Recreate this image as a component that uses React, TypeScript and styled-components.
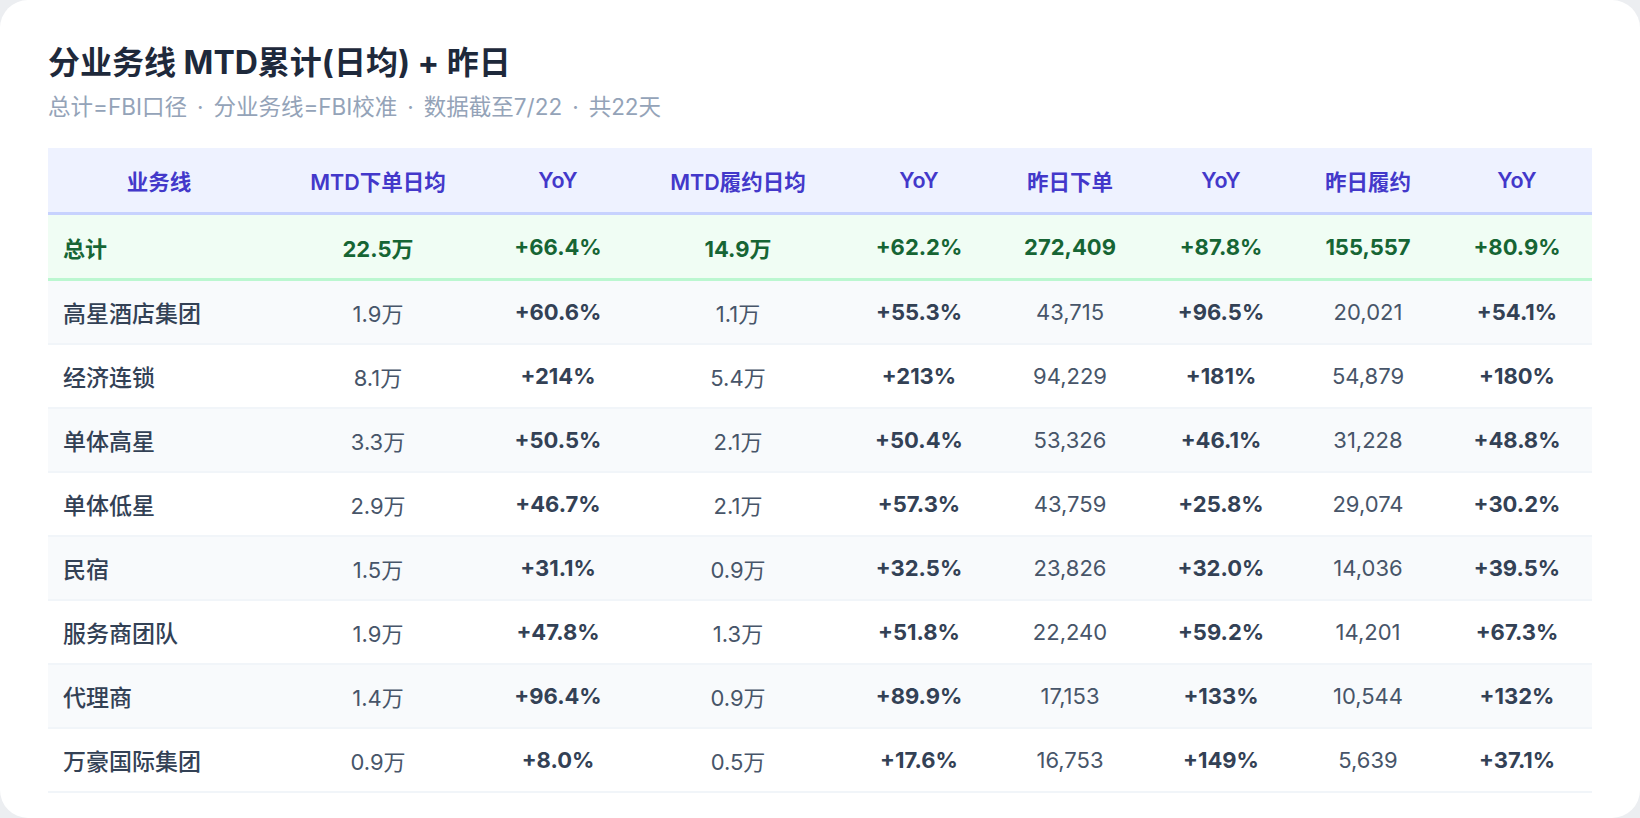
import React from "react";
import styled, { createGlobalStyle } from "styled-components";

const GlobalStyle = createGlobalStyle`
  html, body {
    margin: 0;
    padding: 0;
    background: #eceef1;
  }
  body {
    font-family: "Inter", "Noto Sans CJK SC", sans-serif;
    -webkit-font-smoothing: antialiased;
  }
`;

type Row = {
  name: string;
  values: string[];
};

const COLUMNS = [
  "业务线",
  "MTD下单日均",
  "YoY",
  "MTD履约日均",
  "YoY",
  "昨日下单",
  "YoY",
  "昨日履约",
  "YoY",
];

const WIDTHS = [222, 216, 144, 216, 146, 156, 146, 148, 150];

const TOTAL: Row = {
  name: "总计",
  values: ["22.5万", "+66.4%", "14.9万", "+62.2%", "272,409", "+87.8%", "155,557", "+80.9%"],
};

const ROWS: Row[] = [
  { name: "高星酒店集团", values: ["1.9万", "+60.6%", "1.1万", "+55.3%", "43,715", "+96.5%", "20,021", "+54.1%"] },
  { name: "经济连锁", values: ["8.1万", "+214%", "5.4万", "+213%", "94,229", "+181%", "54,879", "+180%"] },
  { name: "单体高星", values: ["3.3万", "+50.5%", "2.1万", "+50.4%", "53,326", "+46.1%", "31,228", "+48.8%"] },
  { name: "单体低星", values: ["2.9万", "+46.7%", "2.1万", "+57.3%", "43,759", "+25.8%", "29,074", "+30.2%"] },
  { name: "民宿", values: ["1.5万", "+31.1%", "0.9万", "+32.5%", "23,826", "+32.0%", "14,036", "+39.5%"] },
  { name: "服务商团队", values: ["1.9万", "+47.8%", "1.3万", "+51.8%", "22,240", "+59.2%", "14,201", "+67.3%"] },
  { name: "代理商", values: ["1.4万", "+96.4%", "0.9万", "+89.9%", "17,153", "+133%", "10,544", "+132%"] },
  { name: "万豪国际集团", values: ["0.9万", "+8.0%", "0.5万", "+17.6%", "16,753", "+149%", "5,639", "+37.1%"] },
];

const App = () => {
  return (
    <>
      <GlobalStyle />
      <Card>
        <Title>分业务线 MTD累计(日均) + 昨日</Title>
        <Subtitle>
          总计=FBI口径<Sep>·</Sep>分业务线=FBI校准<Sep>·</Sep>数据截至7/22<Sep>·</Sep>共22天
        </Subtitle>
        <Table>
          <colgroup>
            {WIDTHS.map((w, i) => (
              <col key={i} style={{ width: w }} />
            ))}
          </colgroup>
          <thead>
            <tr>
              {COLUMNS.map((c, i) => (
                <HeadCell key={i}>{c}</HeadCell>
              ))}
            </tr>
          </thead>
          <tbody>
            <TotalRow>
              <TotalCell $label>{TOTAL.name}</TotalCell>
              {TOTAL.values.map((v, i) => (
                <TotalCell key={i}>{v}</TotalCell>
              ))}
            </TotalRow>
            {ROWS.map((r, idx) => (
              <BodyRow key={r.name} $striped={idx % 2 === 0}>
                <LabelCell>{r.name}</LabelCell>
                {r.values.map((v, i) => (
                  <ValueCell key={i} $yoy={i % 2 === 1}>
                    {v}
                  </ValueCell>
                ))}
              </BodyRow>
            ))}
          </tbody>
        </Table>
      </Card>
    </>
  );
};

export default App;

//----------style----------
const Card = styled.div`
  box-sizing: border-box;
  width: 100%;
  height: 818px;
  background: #ffffff;
  border-radius: 28px;
  padding: 44px 48px 0;
  display: flex;
  flex-direction: column;
`;

const Title = styled.h1`
  margin: 0;
  font-size: 32px;
  line-height: 38px;
  font-weight: 700;
  color: #1e293b;
`;

const Subtitle = styled.div`
  margin-top: 10px;
  font-size: 22.5px;
  line-height: 30px;
  color: #94a3b8;
`;

const Sep = styled.span`
  padding: 0 10px;
`;

const Table = styled.table`
  margin-top: 26px;
  width: 1544px;
  border-collapse: collapse;
  table-layout: fixed;
`;

const HeadCell = styled.th`
  height: 64px;
  padding: 0;
  background: #eef2ff;
  color: #4338ca;
  font-size: 21.5px;
  font-weight: 600;
  text-align: center;
  border-bottom: 3px solid #c7d2fe;
`;

const TotalRow = styled.tr`
  background: #f0fdf4;
  border-bottom: 3px solid #bbf7d0;
`;

const TotalCell = styled.td<{ $label?: boolean }>`
  height: 63px;
  padding: ${(p) => (p.$label ? "0 0 0 15px" : "0")};
  text-align: ${(p) => (p.$label ? "left" : "center")};
  color: #166534;
  font-size: 22px;
  font-weight: 700;
`;

const BodyRow = styled.tr<{ $striped: boolean }>`
  background: ${(p) => (p.$striped ? "#f8fafc" : "#ffffff")};
  border-bottom: 2px solid #f1f5f9;
`;

const LabelCell = styled.td`
  height: 62px;
  padding: 0 0 0 15px;
  text-align: left;
  color: #334155;
  font-size: 23px;
  font-weight: 500;
`;

const ValueCell = styled.td<{ $yoy: boolean }>`
  height: 62px;
  padding: 0;
  text-align: center;
  font-size: 22px;
  color: ${(p) => (p.$yoy ? "#334155" : "#475569")};
  font-weight: ${(p) => (p.$yoy ? 700 : 400)};
`;
